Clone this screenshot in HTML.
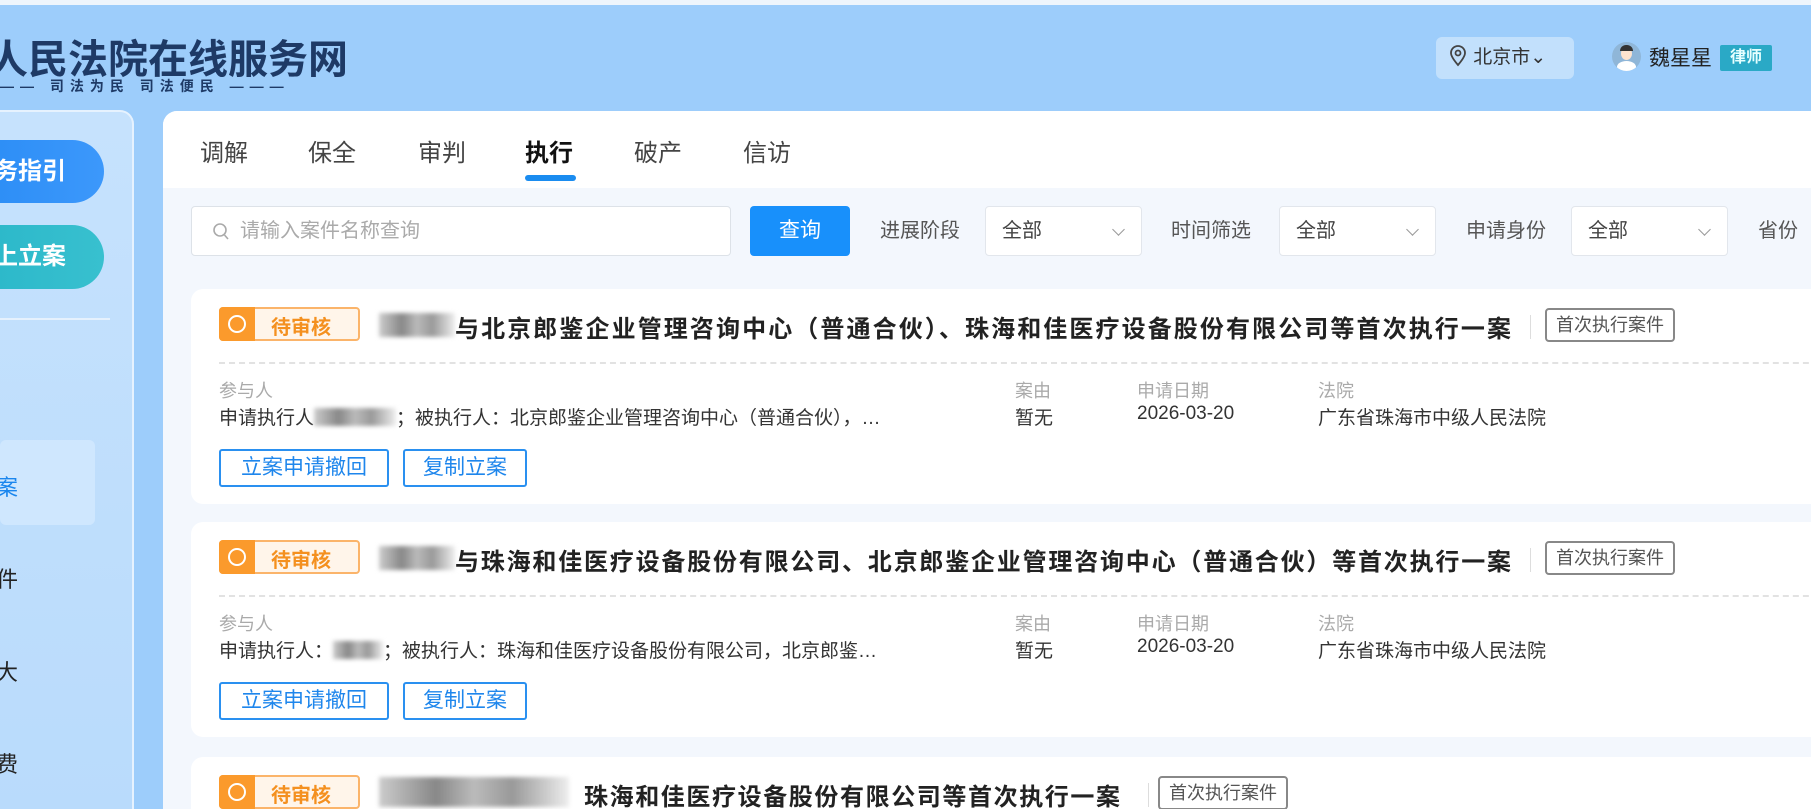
<!DOCTYPE html>
<html><head><meta charset="utf-8"><style>
*{margin:0;padding:0;box-sizing:border-box}
html,body{width:1811px;height:809px;overflow:hidden}
body{background:#9dcdfb;font-family:"Liberation Sans","Noto Sans CJK SC",sans-serif;position:relative;color:#333}
.abs{position:absolute}
.topstrip{left:0;top:0;width:1811px;height:5px;background:#eef5fc}
.title{left:-12px;top:27px;font-size:40px;font-weight:bold;color:#1e3a66;letter-spacing:0px;white-space:nowrap}
.sub{left:0;top:76px;font-size:14px;color:#1e3a66;white-space:nowrap;font-weight:bold;letter-spacing:6px}
.loc{left:1436px;top:37px;width:138px;height:42px;background:#c2e0fc;border-radius:6px;font-size:19px;color:#333;line-height:42px;padding-left:12px}
.side{left:-20px;top:110px;width:154px;height:699px;background:linear-gradient(#c6e2fd,#b9dbfc);border:2px solid #e6f2fe;border-bottom:none;border-radius:14px 14px 0 0}
.btn1{left:-30px;top:140px;width:134px;height:63px;border-radius:32px;background:linear-gradient(90deg,#2a8cf5,#3c98fb);color:#fff;font-size:24px;font-weight:bold;line-height:63px;text-align:right;padding-right:48px;overflow:hidden;white-space:nowrap}
.btn2{left:-30px;top:225px;width:134px;height:64px;border-radius:32px;background:linear-gradient(90deg,#2ab7c9,#38c0cf);color:#fff;font-size:24px;font-weight:bold;line-height:64px;text-align:right;padding-right:48px;overflow:hidden;white-space:nowrap}
.sep{left:0;top:318px;width:110px;height:2px;background:#e5f1fd}
.hl{left:0;top:440px;width:95px;height:85px;background:#cfe7fe;border-radius:6px}
.si{left:-4px;font-size:22px;color:#222}
.main{left:163px;top:111px;width:1648px;height:698px;background:#f3f7fd;border-radius:14px 0 0 0;overflow:hidden}
.tabs{left:0;top:0;width:1648px;height:77px;background:#fff}
.tab{top:22px;font-size:24px;color:#444}
.ul{left:362px;top:64px;width:51px;height:6px;border-radius:3px;background:#1a8cf0}
.search{left:28px;top:95px;width:540px;height:50px;background:#fff;border:1px solid #dde2e8;border-radius:4px;font-size:20px;color:#aaa;line-height:48px;padding-left:48px}
.qbtn{left:587px;top:95px;width:100px;height:50px;background:#1890fb;border-radius:4px;color:#fff;font-size:21px;line-height:50px;text-align:center}
.fl{top:95px;font-size:20px;color:#555;line-height:50px}
.sel{top:95px;width:157px;height:50px;background:#fff;border:1px solid #e2e6ec;border-radius:4px;font-size:20px;color:#444;line-height:48px;padding-left:16px}
.sel:after{content:"";position:absolute;right:18px;top:18px;width:8px;height:8px;border-right:1.5px solid #999;border-bottom:1.5px solid #999;transform:rotate(45deg)}
.card{left:28px;width:1650px;height:215px;background:#fff;border-radius:12px}
.badge{left:28px;top:18px;width:141px;height:34px;border:2px solid #fbb46a;border-radius:4px;background:#fff5ea}
.badge .ic{position:absolute;left:-2px;top:-2px;width:36px;height:34px;background:#fb9a2c;border-radius:4px 0 0 4px}
.badge .ic:after{content:"";position:absolute;left:9px;top:8px;width:14px;height:14px;border:2.5px solid #fff;border-radius:50%}
.badge span{position:absolute;left:50px;top:2px;font-size:20px;color:#f4901f;font-weight:bold}
.blur{background:linear-gradient(90deg,#ccc,#888 30%,#bbb 50%,#999 70%,#eee);filter:blur(2px)}
.ct{top:20px;font-size:24px;font-weight:bold;color:#222;white-space:nowrap;letter-spacing:2.1px}
.vbar{top:26px;width:1px;height:24px;background:#ddd}
.tag{top:19px;height:34px;border:2px solid #888;border-radius:4px;font-size:18px;color:#555;line-height:30px;padding:0 9px}
.dash{left:28px;top:73px;width:1640px;border-top:2px dashed #e2e2e2}
.lab{top:88px;font-size:18px;color:#aaa}
.val{top:114px;font-size:19px;color:#333;white-space:nowrap}
.ob{top:160px;height:38px;border:2px solid #2a90f0;border-radius:3px;font-size:21px;color:#1e86ec;line-height:34px;text-align:center}
</style></head><body>
<div class="abs topstrip"></div>
<div class="abs title">人民法院在线服务网</div>
<div class="abs sub">—— 司法为民 司法便民 ———</div>
<div class="abs loc"><svg width="20" height="22" viewBox="0 0 20 22" style="vertical-align:-4px"><path d="M10 20 C4 13 3 10 3 8 A7 7 0 0 1 17 8 C17 10 16 13 10 20Z" fill="none" stroke="#444" stroke-width="1.8"/><circle cx="10" cy="8" r="2.5" fill="none" stroke="#444" stroke-width="1.8"/></svg> 北京市⌄</div>
<div class="abs" style="left:1612px;top:42px;width:29px;height:29px;border-radius:50%;background:#8fb6d8;overflow:hidden"><div style="position:absolute;left:9px;top:5px;width:11px;height:13px;border-radius:50%;background:#fde3cf"></div><div style="position:absolute;left:5px;top:19px;width:19px;height:12px;border-radius:50% 50% 0 0;background:#fff"></div><div style="position:absolute;left:8px;top:3px;width:13px;height:6px;border-radius:6px 6px 0 0;background:#333"></div></div>
<div class="abs" style="left:1649px;top:42px;font-size:21px;color:#222">魏星星</div>
<div class="abs" style="left:1720px;top:45px;width:52px;height:26px;background:#2aa9c6;color:#e6ffff;font-size:16px;font-weight:bold;text-align:center;line-height:26px;border-radius:2px">律师</div>

<div class="abs side"></div>
<div class="abs btn1">服务指引</div>
<div class="abs btn2">网上立案</div>
<div class="abs sep"></div>
<div class="abs hl"></div>
<div class="abs si" style="top:470px;color:#1a86ee">案</div>
<div class="abs si" style="top:562px">件</div>
<div class="abs si" style="top:655px">大</div>
<div class="abs si" style="top:747px">费</div>

<div class="abs main">
 <div class="abs tabs">
  <div class="abs tab" style="left:37px">调解</div>
  <div class="abs tab" style="left:145px">保全</div>
  <div class="abs tab" style="left:255px">审判</div>
  <div class="abs tab" style="left:362px;color:#111;font-weight:bold">执行</div>
  <div class="abs tab" style="left:471px">破产</div>
  <div class="abs tab" style="left:580px">信访</div>
  <div class="abs ul"></div>
 </div>
 <div class="abs search"><svg class="abs" style="left:20px;top:15px" width="18" height="20" viewBox="0 0 18 20"><circle cx="8" cy="8" r="6" fill="none" stroke="#aaa" stroke-width="1.6"/><path d="M12.5 13 L16 17" stroke="#aaa" stroke-width="1.6"/></svg>请输入案件名称查询</div>
 <div class="abs qbtn">查询</div>
 <div class="abs fl" style="left:717px">进展阶段</div>
 <div class="abs sel" style="left:822px">全部</div>
 <div class="abs fl" style="left:1008px">时间筛选</div>
 <div class="abs sel" style="left:1116px">全部</div>
 <div class="abs fl" style="left:1303px">申请身份</div>
 <div class="abs sel" style="left:1408px">全部</div>
 <div class="abs fl" style="left:1595px">省份</div>

 <div class="abs card" style="top:178px">
  <div class="abs badge"><div class="ic"></div><span>待审核</span></div>
  <div class="abs blur" style="left:188px;top:24px;width:76px;height:24px"></div>
  <div class="abs ct" style="left:264px">与北京郎鉴企业管理咨询中心（普通合伙）、珠海和佳医疗设备股份有限公司等首次执行一案</div>
  <div class="abs vbar" style="left:1339px"></div>
  <div class="abs tag" style="left:1354px">首次执行案件</div>
  <div class="abs dash"></div>
  <div class="abs lab" style="left:28px">参与人</div>
  <div class="abs lab" style="left:824px">案由</div>
  <div class="abs lab" style="left:946px">申请日期</div>
  <div class="abs lab" style="left:1127px">法院</div>
  <div class="abs val" style="left:28px">申请执行人<span style="display:inline-block;width:82px;height:18px;vertical-align:-2px" class="blur"></span>；被执行人：北京郎鉴企业管理咨询中心（普通合伙），…</div>
  <div class="abs val" style="left:824px">暂无</div>
  <div class="abs val" style="left:946px">2026-03-20</div>
  <div class="abs val" style="left:1127px">广东省珠海市中级人民法院</div>
  <div class="abs ob" style="left:28px;width:170px">立案申请撤回</div>
  <div class="abs ob" style="left:212px;width:124px">复制立案</div>
 </div>

 <div class="abs card" style="top:411px">
  <div class="abs badge"><div class="ic"></div><span>待审核</span></div>
  <div class="abs blur" style="left:188px;top:24px;width:76px;height:24px"></div>
  <div class="abs ct" style="left:264px;letter-spacing:1.8px">与珠海和佳医疗设备股份有限公司、北京郎鉴企业管理咨询中心（普通合伙）等首次执行一案</div>
  <div class="abs vbar" style="left:1339px"></div>
  <div class="abs tag" style="left:1354px">首次执行案件</div>
  <div class="abs dash"></div>
  <div class="abs lab" style="left:28px">参与人</div>
  <div class="abs lab" style="left:824px">案由</div>
  <div class="abs lab" style="left:946px">申请日期</div>
  <div class="abs lab" style="left:1127px">法院</div>
  <div class="abs val" style="left:28px">申请执行人：<span style="display:inline-block;width:50px;height:18px;vertical-align:-2px" class="blur"></span>；被执行人：珠海和佳医疗设备股份有限公司，北京郎鉴…</div>
  <div class="abs val" style="left:824px">暂无</div>
  <div class="abs val" style="left:946px">2026-03-20</div>
  <div class="abs val" style="left:1127px">广东省珠海市中级人民法院</div>
  <div class="abs ob" style="left:28px;width:170px">立案申请撤回</div>
  <div class="abs ob" style="left:212px;width:124px">复制立案</div>
 </div>

 <div class="abs card" style="top:646px;height:52px;border-radius:12px 12px 0 0">
  <div class="abs badge"><div class="ic"></div><span>待审核</span></div>
  <div class="abs blur" style="left:188px;top:20px;width:190px;height:30px"></div>
  <div class="abs ct" style="left:393px;letter-spacing:1.6px">珠海和佳医疗设备股份有限公司等首次执行一案</div>
  <div class="abs vbar" style="left:957px"></div>
  <div class="abs tag" style="left:967px">首次执行案件</div>
 </div>
</div>
</body></html>
